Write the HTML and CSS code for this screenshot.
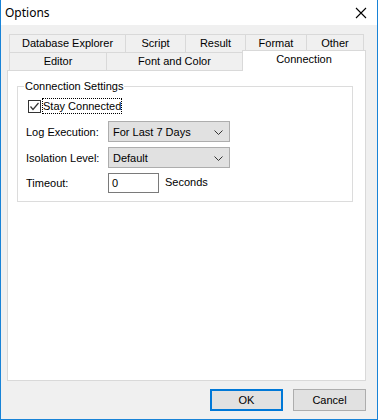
FILE: index.html
```html
<!DOCTYPE html>
<html lang="en">
<head>
    <meta charset="UTF-8">
    <title>Options</title>
    <link rel="stylesheet" href="styles.css">
</head>
<body>
    <div class="titlebar">
        <span class="title">Options</span>
        <svg class="close" width="12" height="12" viewBox="0 0 12 12">
            <path d="M1 1 L11 11 M11 1 L1 11" stroke="#000" stroke-width="1.1" fill="none"/>
        </svg>
    </div>

    <div class="content">
        <div class="tabs">
            <div class="tab-row">
                <div class="tab w116">Database Explorer</div>
                <div class="tab w60">Script</div>
                <div class="tab w60">Result</div>
                <div class="tab w61">Format</div>
                <div class="tab w57">Other</div>
            </div>
            <div class="tab-row">
                <div class="tab w97">Editor</div>
                <div class="tab w136">Font and Color</div>
                <div class="tab active">Connection</div>
            </div>
        </div>

        <div class="panel">
            <fieldset class="group">
                <legend>Connection Settings</legend>
                <div class="check-row">
                    <span class="checkbox">
                        <svg width="11" height="11" viewBox="0 0 11 11">
                            <path d="M1.5 5.5 L4 8.5 L9.5 2" stroke="#333" stroke-width="1.2" fill="none"/>
                        </svg>
                    </span>
                    <span class="check-label">Stay Connected</span>
                </div>
                <div class="field-row">
                    <label>Log Execution:</label>
                    <div class="combo">
                        <span>For Last 7 Days</span>
                        <svg width="9" height="5" viewBox="0 0 9 5"><path d="M0.5 0.5 L4.5 4.5 L8.5 0.5" stroke="#333" fill="none"/></svg>
                    </div>
                </div>
                <div class="field-row">
                    <label>Isolation Level:</label>
                    <div class="combo">
                        <span>Default</span>
                        <svg width="9" height="5" viewBox="0 0 9 5"><path d="M0.5 0.5 L4.5 4.5 L8.5 0.5" stroke="#333" fill="none"/></svg>
                    </div>
                </div>
                <div class="field-row">
                    <label>Timeout:</label>
                    <div class="textbox">0</div>
                    <span class="unit">Seconds</span>
                </div>
            </fieldset>
        </div>

        <div class="buttons">
            <button class="btn default">OK</button>
            <button class="btn">Cancel</button>
        </div>
    </div>
</body>
</html>
```

FILE: styles.css
```css
* {
    box-sizing: border-box;
}

body {
    margin: 0;
    width: 378px;
    height: 420px;
    background-color: #f0f0f0;
    border: 1px solid #1883d7;
    border-top: none;
    font-family: 'Liberation Sans', Arial, sans-serif;
    font-size: 11px;
    color: #000;
    display: flex;
    flex-direction: column;
}

.titlebar {
    height: 25px;
    background-color: #fff;
    display: flex;
    align-items: center;
    justify-content: space-between;
    padding: 0 10px 0 4px;
}

.title {
    font-family: 'Noto Sans', sans-serif;
    font-size: 12px;
}

.content {
    flex: 1;
    padding: 9px 10px 0 6px;
}

.tabs {
    padding-left: 2px;
}

.tab-row {
    display: flex;
    height: 18px;
}

.tab {
    background-color: #f0f0f0;
    border: 1px solid #d9d9d9;
    border-bottom: none;
    margin-right: -1px;
    text-align: center;
    line-height: 17px;
}

.w116 { width: 117px; }
.w60 { width: 61px; }
.w61 { width: 62px; }
.w57 { width: 58px; }
.w97 { width: 98px; }
.w136 { width: 137px; }

.tab.active {
    position: relative;
    z-index: 1;
    width: 124px;
    height: 21px;
    margin-top: -2px;
    background-color: #fff;
    line-height: 16px;
}

.panel {
    width: 359px;
    height: 311px;
    background-color: #fff;
    border: 1px solid #d9d9d9;
    padding: 9px 0 0 9px;
}

.group {
    width: 336px;
    height: 122px;
    margin: 0;
    padding: 6px 0 0 8px;
    border: 1px solid #dcdcdc;
}

.group legend {
    margin-left: -2px;
    padding: 0 1px;
    font-size: 11px;
}

.check-row {
    display: flex;
    align-items: center;
    padding-left: 2px;
    height: 16px;
}

.checkbox {
    width: 13px;
    height: 13px;
    border: 1px solid #333;
    background-color: #fff;
    display: flex;
    align-items: center;
    justify-content: center;
}

.check-label {
    margin-left: 1px;
    padding: 1px 1px;
    outline: 1px dotted #000;
    outline-offset: -1px;
    line-height: 14px;
}

.field-row {
    display: flex;
    align-items: center;
    margin-top: 5px;
}

.check-row + .field-row {
    margin-top: 7px;
}

.field-row label {
    width: 82px;
}

.combo {
    width: 122px;
    height: 21px;
    background-color: #e1e1e1;
    border: 1px solid #adadad;
    display: flex;
    align-items: center;
    justify-content: space-between;
    padding: 1px 6px 0 4px;
}

.textbox {
    width: 51px;
    height: 20px;
    background-color: #fff;
    border: 1px solid #7a7a7a;
    padding: 2px 3px;
    line-height: 15px;
}

.unit {
    margin-left: 6px;
    margin-top: -2px;
}

.buttons {
    display: flex;
    justify-content: flex-end;
    gap: 10px;
    margin-top: 8px;
    padding-right: 1px;
}

.btn {
    width: 73px;
    height: 22px;
    background-color: #e1e1e1;
    border: 1px solid #adadad;
    font-family: 'Liberation Sans', Arial, sans-serif;
    font-size: 11px;
    color: #000;
    padding: 0;
}

.btn.default {
    border: 2px solid #0078d7;
}
```
